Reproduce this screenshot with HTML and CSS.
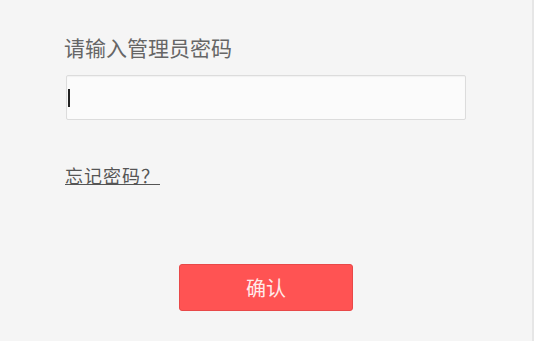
FILE: index.html
```html
<!DOCTYPE html>
<html>
<head>
	<meta charset="utf-8">
	<title>管理员登录</title>
	<link rel="stylesheet" href="styles.css">
</head>
<body>
	<div class="login-panel">
		<div class="login-form">
			<label class="login-label" for="admin-pwd">请输入管理员密码</label>
			<div class="pwd-box" id="admin-pwd">
				<span class="caret"></span>
			</div>
			<a class="forget-link" href="#">忘记密码？</a>
			<div class="btn-row">
				<button type="button" class="confirm-btn">确认</button>
			</div>
		</div>
	</div>
</body>
</html>
```

FILE: styles.css
```css
:root {
  --panel-color: #f5f5f5;
  --text-color: #666666;
  --link-color: #555555;
  --btn-color: #ff5353;
  --btn-border: #e84848;
}

html, body {
  margin: 0;
  padding: 0;
  background-color: #ffffff;
}

.login-panel {
  width: 532px;
  height: 341px;
  background-color: var(--panel-color);
  border-right: 2px solid #e6e6e6;
  font-family: "Microsoft YaHei", "Noto Sans CJK SC", sans-serif;
}

.login-form {
  width: 400px;
  margin: 0 auto;
  padding-top: 32px;
  display: flex;
  flex-direction: column;
}

.login-label {
  font-size: 21px;
  line-height: 30px;
  color: var(--text-color);
  margin-left: -2px;
}

.pwd-box {
  margin-top: 13px;
  height: 43px;
  border: 1px solid #dcdcdc;
  border-radius: 2px;
  background-color: #fbfbfb;
  box-shadow: inset 0 1px 1px rgba(0, 0, 0, 0.04);
  display: flex;
  align-items: center;
}

.caret {
  width: 2px;
  height: 18px;
  margin-left: 1px;
  background-color: #222222;
}

.forget-link {
  align-self: flex-start;
  margin-top: 42px;
  font-size: 18px;
  line-height: 26px;
  letter-spacing: 1px;
  color: var(--link-color);
  text-decoration: underline;
  margin-left: -1px;
}

.btn-row {
  display: flex;
  justify-content: center;
  margin-top: 76px;
}

.confirm-btn {
  width: 174px;
  height: 47px;
  background-color: var(--btn-color);
  border: 1px solid var(--btn-border);
  border-radius: 3px;
  color: #ffeaea;
  font-family: inherit;
  font-size: 20px;
  cursor: pointer;
}
```
